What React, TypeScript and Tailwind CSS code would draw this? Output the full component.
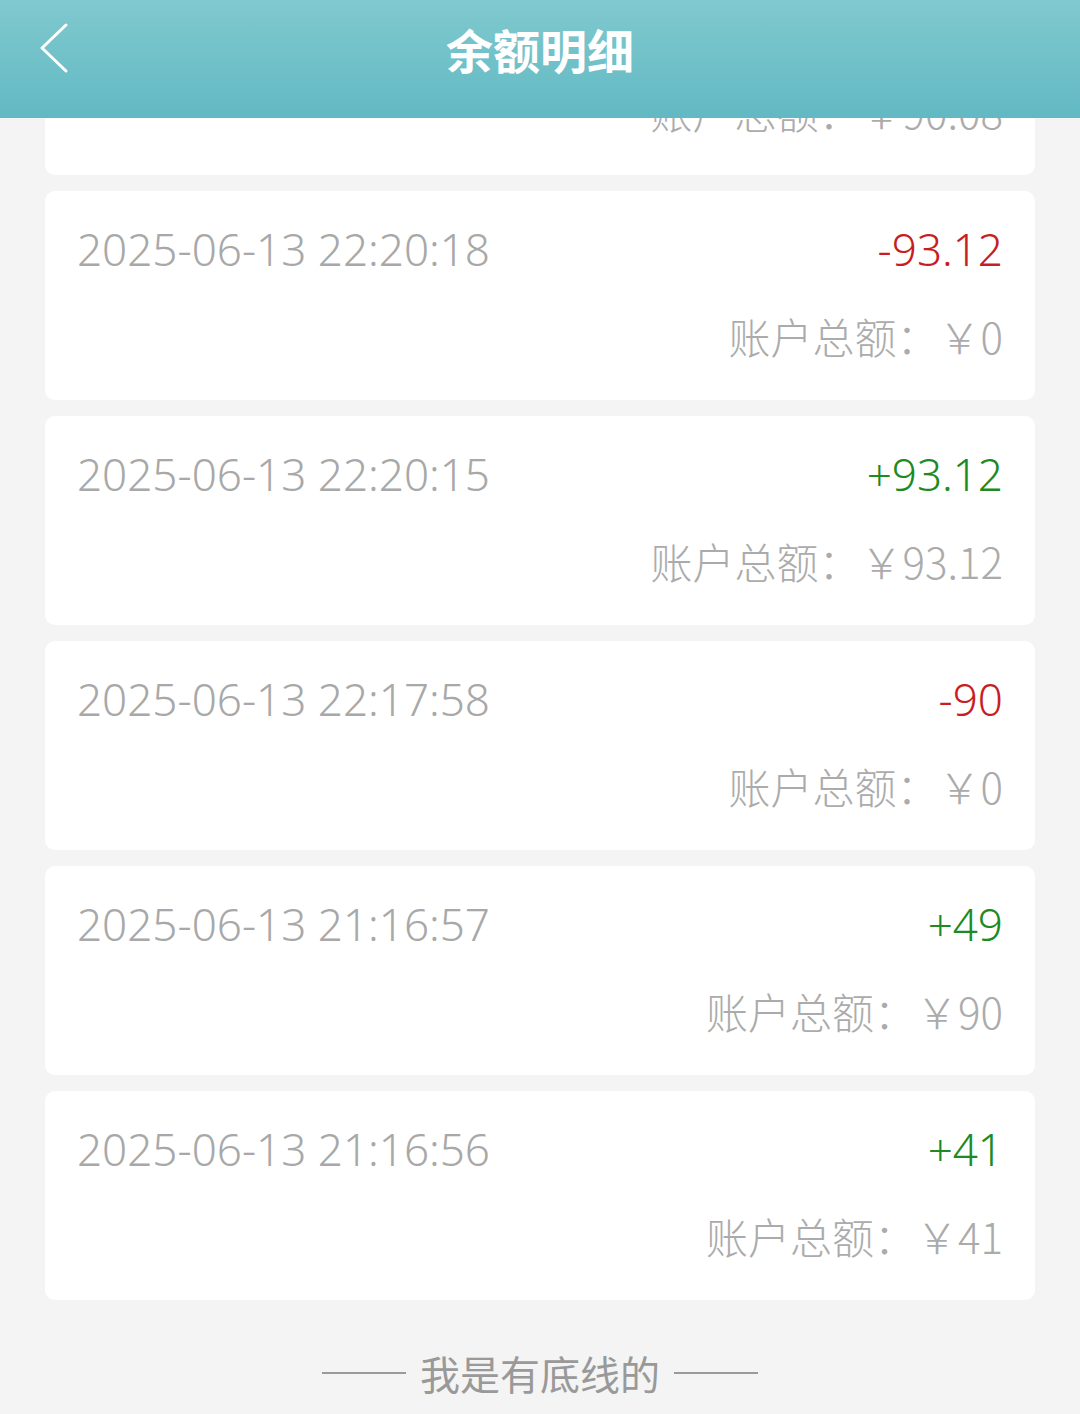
import React from "react";

type Record = {
  time: string;
  amount: string;
  total: string;
};

const records: Record[] = [
  { time: "2025-06-13 22:20:18", amount: "-93.12", total: "0" },
  { time: "2025-06-13 22:20:15", amount: "+93.12", total: "93.12" },
  { time: "2025-06-13 22:17:58", amount: "-90", total: "0" },
  { time: "2025-06-13 21:16:57", amount: "+49", total: "90" },
  { time: "2025-06-13 21:16:56", amount: "+41", total: "41" },
];

const font = {
  fontFamily: '"Noto Sans", "Noto Sans CJK SC", sans-serif',
};

function RecordCard({ time, amount, total }: Record) {
  const isMinus = amount.startsWith("-");
  return (
    <div className="bg-white rounded-[10px] px-8 pt-[36px] pb-[43px]">
      <div className="flex justify-between items-center h-[44px]">
        <span className="text-[44px] leading-[44px] text-[#a8a8a8] font-light">
          {time}
        </span>
        <span
          className={
            isMinus
              ? "text-[44px] leading-[44px] text-[#c71e24] font-light"
              : "text-[44px] leading-[44px] text-[#1d8a22] font-light"
          }
        >
          {amount}
        </span>
      </div>
      <div className="mt-[44px] flex justify-end h-[42px]">
        <span className="text-[42px] leading-[42px] text-[#ababab] [font-family:'Noto_Sans_CJK_SC',sans-serif] font-light">
          账户总额：￥{total}
        </span>
      </div>
    </div>
  );
}

export default function App() {
  return (
    <div className="relative min-h-screen bg-[#f4f4f4] overflow-hidden" style={font}>
      <header className="absolute top-0 left-0 right-0 z-10 h-[118px] bg-gradient-to-b from-[#80c9cf] to-[#62b9c3]">
        <div className="relative h-[96px] flex items-center justify-center">
          <svg
            className="absolute left-[36px] top-[22px]"
            width="36"
            height="52"
            viewBox="0 0 36 52"
            fill="none"
          >
            <polyline
              points="30,3 6,26 30,49"
              stroke="white"
              strokeWidth="3"
              strokeLinecap="round"
              strokeLinejoin="round"
            />
          </svg>
          <h1 className="text-[47px] font-bold text-white leading-none [font-family:'Noto_Sans_CJK_SC',sans-serif]">
            余额明细
          </h1>
        </div>
      </header>

      <div className="px-[45px] -mt-[34px] flex flex-col gap-[16px]">
        <div className="bg-white rounded-[10px] px-8 pt-[36px] pb-[43px]">
          <div className="h-[44px]"></div>
          <div className="mt-[44px] flex justify-end h-[42px]">
            <span className="text-[42px] leading-[42px] text-[#ababab] [font-family:'Noto_Sans_CJK_SC',sans-serif] font-light">
              账户总额：￥90.08
            </span>
          </div>
        </div>
        {records.map((r) => (
          <RecordCard key={r.time} {...r} />
        ))}
      </div>

      <div className="mt-[53px] pb-[30px] flex justify-center items-center gap-[14px]">
        <div className="w-[84px] h-[2px] bg-[#9a9a9a]"></div>
        <span className="text-[40px] leading-[40px] text-[#999999] [font-family:'Noto_Sans_CJK_SC',sans-serif]">
          我是有底线的
        </span>
        <div className="w-[84px] h-[2px] bg-[#9a9a9a]"></div>
      </div>
    </div>
  );
}
